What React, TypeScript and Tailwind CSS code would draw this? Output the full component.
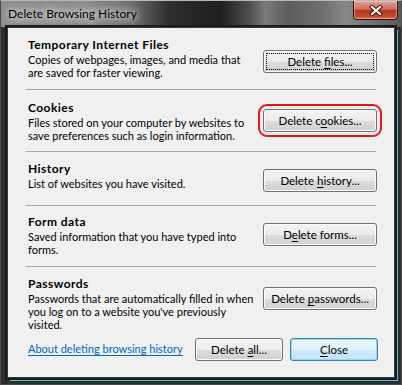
import React from 'react'

type SectionProps = {
  title: string
  lines: string[]
  button: React.ReactNode
  height: string
  textTop: string
  buttonTop: string
}

function Section({ title, lines, button, height, textTop, buttonTop }: SectionProps) {
  return (
    <div className={`flex ${height}`}>
      <div className={`flex-1 min-w-0 pl-[2px] whitespace-nowrap ${textTop}`}>
        <div className="font-bold text-[12px] tracking-[0.45px] leading-[15px]">{title}</div>
        <div className="mt-[1px] leading-[13px]">
          {lines.map((line, i) => (
            <div key={i}>{line}</div>
          ))}
        </div>
      </div>
      <div className={`shrink-0 ${buttonTop}`}>{button}</div>
    </div>
  )
}

function Separator() {
  return <div className="h-px mr-[1px] bg-[#a8a8a8]" />
}

interface WinButtonProps {
  children: React.ReactNode
  width?: string
  focused?: boolean
  isDefault?: boolean
}

function WinButton({ children, width = 'w-[114px]', focused, isDefault }: WinButtonProps) {
  return (
    <button
      className={`relative h-[23px] ${width} rounded-[3px] border text-[11.5px] leading-none text-black whitespace-nowrap ${
        isDefault
          ? 'border-[#3c7fb1] bg-[linear-gradient(180deg,#eef7fd_0%,#e1f1fb_50%,#cfe8f8_51%,#c4e2f6_100%)] shadow-[inset_0_0_0_1px_#8fd8f7]'
          : 'border-[#707070] bg-[linear-gradient(180deg,#f3f3f3_0%,#ebebeb_50%,#dddddd_51%,#cfcfcf_100%)] shadow-[inset_0_0_0_1px_#fbfbfb]'
      }`}
    >
      {focused && <span className="absolute inset-[2px] border border-dotted border-black" />}
      <span className="relative">{children}</span>
    </button>
  )
}

function Acc({ children }: { children: React.ReactNode }) {
  return <span className="underline decoration-1 underline-offset-[2px]">{children}</span>
}

export default function App() {
  return (
    <div className="w-[402px] h-[385px] flex flex-col overflow-hidden border border-[#4a4a4a] border-t-[#b8b8b8] bg-[#2e2e2e] font-['Lato',sans-serif] text-[11px] text-black">
      {/* Title bar */}
      <div className="h-[26px] shrink-0 flex justify-between bg-[linear-gradient(90deg,#8c8c8c_0%,#8a8a8a_22%,#6a6a6a_33%,#2e2e2e_42%,#1f1f1f_55%,#4d4d4d_62%,#7a7a7a_66%,#5c5c5c_72%,#6e6e6e_80%,#888888_86%,#5a5a5a_100%)]">
        <div className="pl-[7px] pt-[5px] leading-[16px] text-[12px] text-black [text-shadow:0_0_6px_#e8e8e8,0_0_10px_#dcdcdc,0_0_14px_#cfcfcf]">
          Delete Browsing History
        </div>
        <div className="mr-[3px] w-[45px] h-[19px] flex items-center justify-center rounded-b-[4px] border border-t-0 border-[#3b0d06] bg-[linear-gradient(180deg,#e0a092_0%,#cf705d_45%,#b5361f_52%,#c24a30_85%,#d9735a_100%)] shadow-[inset_0_0_0_1px_rgba(255,255,255,0.35)]">
          <svg width="14" height="11" viewBox="0 0 14 11">
            <path d="M3 2 L11 9 M11 2 L3 9" stroke="#4a1208" strokeWidth="4.2" strokeLinecap="square" fill="none" />
            <path d="M3 2 L11 9 M11 2 L3 9" stroke="#ffffff" strokeWidth="2.2" strokeLinecap="square" fill="none" />
          </svg>
        </div>
      </div>

      {/* Frame + client area */}
      <div className="flex-1 flex px-[6px] pb-[6px]">
        <div className="flex-1 flex flex-col border border-[#3a3a3a] bg-[#f0f0f0] pl-[18px] pr-[17px] shadow-[0_0_0_2px_#1c1c1c,3px_3px_0_0_#3cc8f0]">
          <Section
            title="Temporary Internet Files"
            lines={['Copies of webpages, images, and media that', 'are saved for faster viewing.']}
            height="h-[61px]"
            textTop="pt-[9px]"
            buttonTop="pt-[22px]"
            button={
              <WinButton focused>
                Delete <Acc>f</Acc>iles...
              </WinButton>
            }
          />
          <Separator />
          <Section
            title="Cookies"
            lines={['Files stored on your computer by websites to', 'save preferences such as login information.']}
            height="h-[61px]"
            textTop="pt-[10px]"
            buttonTop="pt-[19px]"
            button={
              <div className="relative">
                <WinButton>
                  Delete c<Acc>o</Acc>okies...
                </WinButton>
                <span className="absolute -inset-[5px] rounded-[9px] border-2 border-[#e8160f]" />
              </div>
            }
          />
          <Separator />
          <Section
            title="History"
            lines={['List of websites you have visited.']}
            height="h-[53px]"
            textTop="pt-[9px]"
            buttonTop="pt-[17px]"
            button={
              <WinButton>
                Delete <Acc>h</Acc>istory...
              </WinButton>
            }
          />
          <Separator />
          <Section
            title="Form data"
            lines={['Saved information that you have typed into', 'forms.']}
            height="h-[60px]"
            textTop="pt-[8px]"
            buttonTop="pt-[17px]"
            button={
              <WinButton>
                D<Acc>e</Acc>lete forms...
              </WinButton>
            }
          />
          <Separator />
          <Section
            title="Passwords"
            lines={[
              'Passwords that are automatically filled in when',
              "you log on to a website you've previously",
              'visited.',
            ]}
            height="h-[71px]"
            textTop="pt-[9px]"
            buttonTop="pt-[20px]"
            button={
              <WinButton>
                Delete <Acc>p</Acc>asswords...
              </WinButton>
            }
          />

          {/* Bottom row */}
          <div className="h-[23px] flex items-center -mr-[1px]">
            <a href="#" className="pl-[2px] whitespace-nowrap text-[#0066cc] underline decoration-1 underline-offset-[2px]">
              About deleting browsing history
            </a>
            <div className="ml-auto flex gap-[7px]">
              <WinButton width="w-[88px]">
                Delete <Acc>a</Acc>ll...
              </WinButton>
              <WinButton width="w-[88px]" isDefault>
                <Acc>C</Acc>lose
              </WinButton>
            </div>
          </div>
        </div>
      </div>
    </div>
  )
}
